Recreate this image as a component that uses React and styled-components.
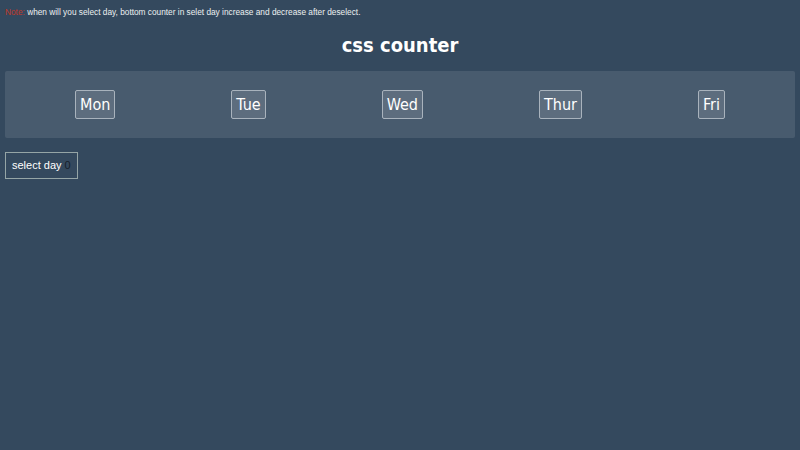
import { useState } from "react"
import styled, { createGlobalStyle } from "styled-components"

const GlobalStyle = createGlobalStyle`
  html, body {
    margin: 0;
    padding: 0;
    background: #34495e;
  }
  body {
    font-family: "DejaVu Sans Condensed", "DejaVu Sans", sans-serif;
    color: #ecf0f1;
  }
`

const Page = styled.div`
  padding: 0 5px;
  min-height: 450px;
`

const Note = styled.p`
  margin: 0;
  padding-top: 6px;
  font-family: "Liberation Sans", Arial, sans-serif;
  font-size: 8.3px;
  line-height: 12px;
  color: #ecf0f1;

  span {
    color: #c0392b;
  }
`

const Title = styled.h1`
  margin: 15px 0 14px;
  text-align: center;
  font-size: 20px;
  line-height: 24px;
  font-weight: bold;
  color: #ffffff;
`

const Days = styled.div`
  display: flex;
  justify-content: space-around;
  align-items: center;
  padding: 0 12px;
  height: 67px;
  background: rgba(255, 255, 255, 0.1);
  border-radius: 2px;
`

const DayButton = styled.button`
  font-family: "DejaVu Sans Condensed", "DejaVu Sans", sans-serif;
  font-size: 16px;
  line-height: 19px;
  padding: 4px 4px;
  color: #ffffff;
  background: ${(props) => (props.selected ? "#16a085" : "#5d6d7e")};
  border: 1px solid #a9b3bd;
  border-radius: 2px;
  cursor: pointer;
`

const Counter = styled.div`
  display: inline-flex;
  align-items: center;
  margin-top: 14px;
  padding: 5px 6px;
  border: 1px solid #95a5a6;
  font-family: "Liberation Sans", Arial, sans-serif;
  font-size: 11px;
  line-height: 15px;
  color: #ffffff;
`

const Count = styled.span`
  margin-left: 3px;
  color: #17202a;
`

const days = ["Mon", "Tue", "Wed", "Thur", "Fri"]

const App = () => {
  const [selected, setSelected] = useState([])

  const toggle = (day) => {
    setSelected((prev) =>
      prev.includes(day) ? prev.filter((d) => d !== day) : [...prev, day]
    )
  }

  return (
    <Page>
      <GlobalStyle />
      <Note>
        <span>Note:</span> when will you select day, bottom counter in selet day increase and decrease after deselect.
      </Note>
      <Title>css counter</Title>
      <Days>
        {days.map((day) => (
          <DayButton key={day} selected={selected.includes(day)} onClick={() => toggle(day)}>
            {day}
          </DayButton>
        ))}
      </Days>
      <Counter>
        select day<Count>{selected.length}</Count>
      </Counter>
    </Page>
  )
}

export default App
